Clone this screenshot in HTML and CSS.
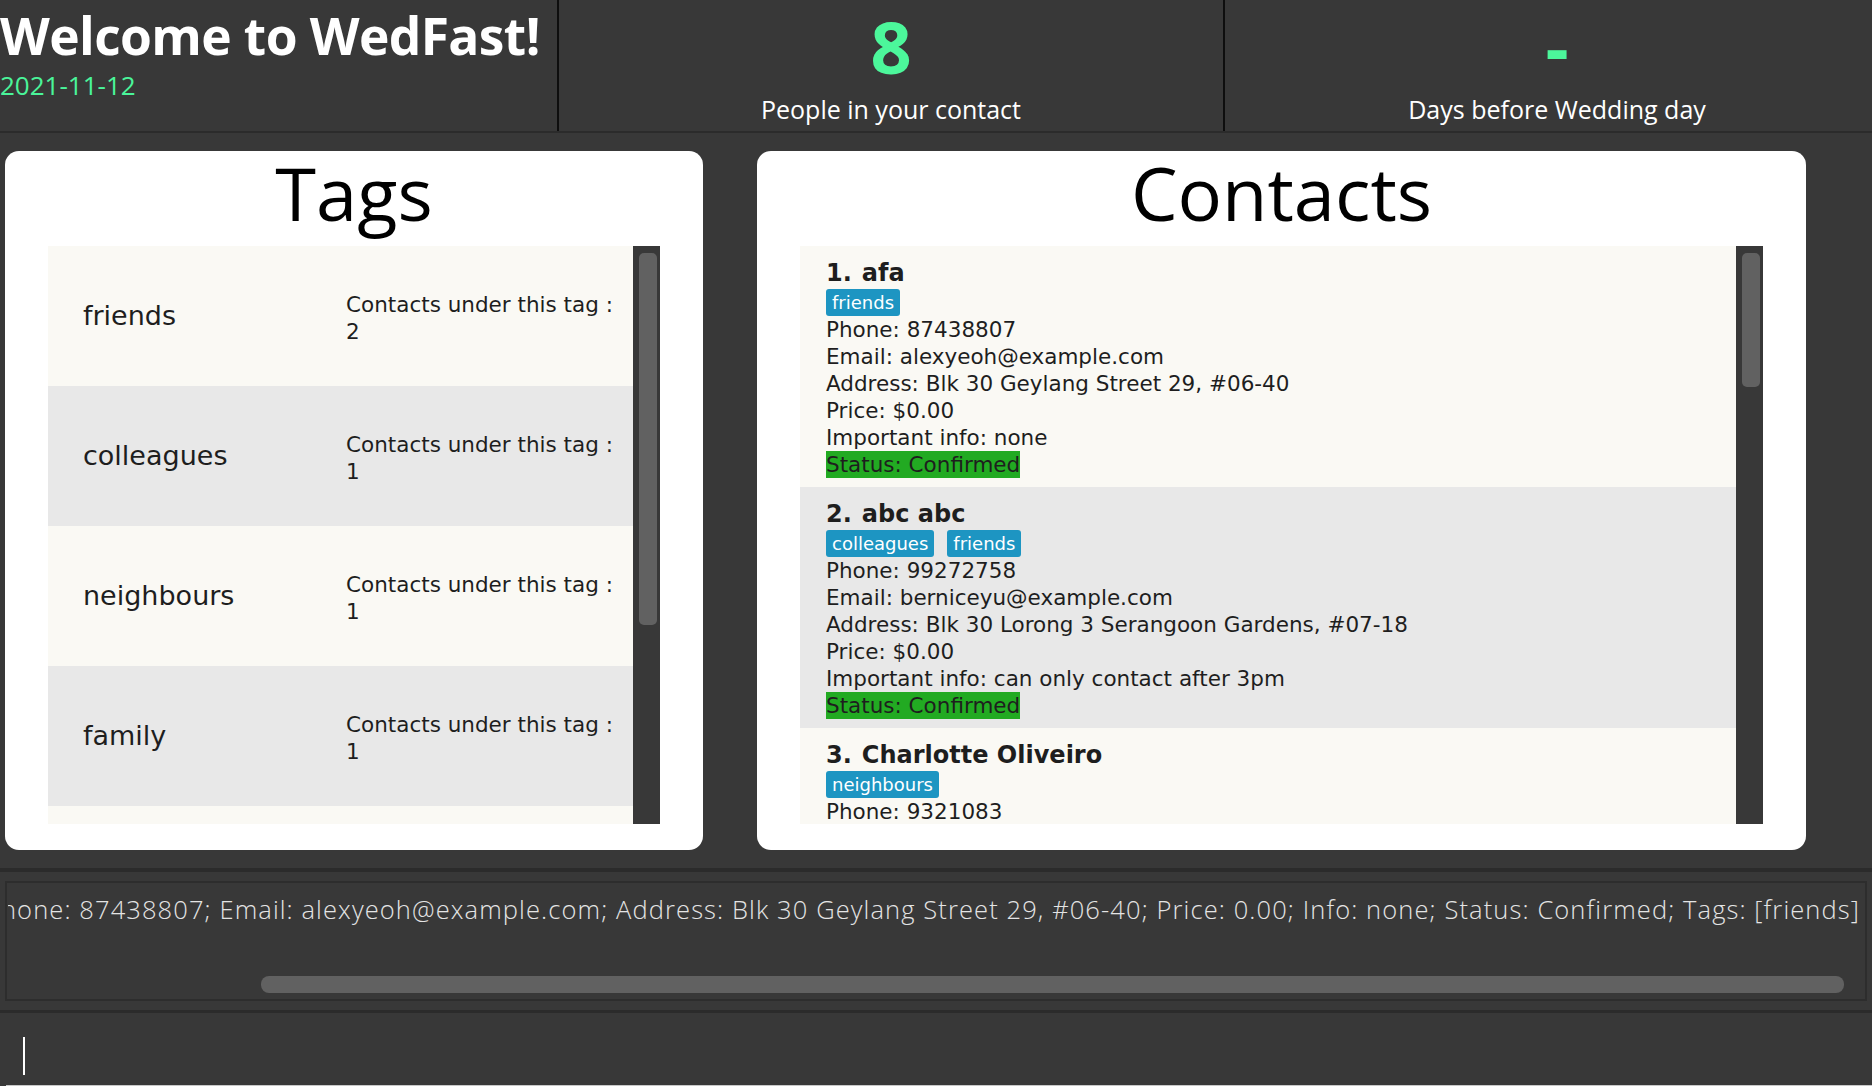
FILE: index.html
```html
<!DOCTYPE html>
<html lang="en">
<head>
<meta charset="utf-8">
<title>WedFast</title>
<link rel="stylesheet" href="styles.css">
</head>
<body>
<div class="app">
  <header class="topbar">
    <div class="welcome">
      <div class="welcome-title">Welcome to WedFast!</div>
      <div class="welcome-date">2021-11-12</div>
    </div>
    <div class="stat">
      <div class="stat-value">8</div>
      <div class="stat-label">People in your contact</div>
    </div>
    <div class="stat stat-last">
      <div class="stat-value">-</div>
      <div class="stat-label">Days before Wedding day</div>
    </div>
  </header>

  <main class="panels">
    <section class="card card-tags">
      <h2 class="card-title">Tags</h2>
      <div class="list">
        <div class="list-body">
          <div class="tag-row">
            <div class="tag-name">friends</div>
            <div class="tag-count">Contacts under this tag :<br>2</div>
          </div>
          <div class="tag-row">
            <div class="tag-name">colleagues</div>
            <div class="tag-count">Contacts under this tag :<br>1</div>
          </div>
          <div class="tag-row">
            <div class="tag-name">neighbours</div>
            <div class="tag-count">Contacts under this tag :<br>1</div>
          </div>
          <div class="tag-row">
            <div class="tag-name">family</div>
            <div class="tag-count">Contacts under this tag :<br>1</div>
          </div>
          <div class="tag-row"></div>
        </div>
        <div class="vscroll"><div class="vthumb vthumb-tags"></div></div>
      </div>
    </section>

    <section class="card card-contacts">
      <h2 class="card-title">Contacts</h2>
      <div class="list">
        <div class="list-body">
          <div class="contact-row">
            <div class="contact-name"><span>1.</span><span>afa</span></div>
            <div class="badges"><span class="badge">friends</span></div>
            <div class="field">Phone: 87438807</div>
            <div class="field">Email: alexyeoh@example.com</div>
            <div class="field">Address: Blk 30 Geylang Street 29, #06-40</div>
            <div class="field">Price: $0.00</div>
            <div class="field">Important info: none</div>
            <div class="field"><span class="status">Status: Confirmed</span></div>
          </div>
          <div class="contact-row">
            <div class="contact-name"><span>2.</span><span>abc abc</span></div>
            <div class="badges"><span class="badge">colleagues</span><span class="badge">friends</span></div>
            <div class="field">Phone: 99272758</div>
            <div class="field">Email: berniceyu@example.com</div>
            <div class="field">Address: Blk 30 Lorong 3 Serangoon Gardens, #07-18</div>
            <div class="field">Price: $0.00</div>
            <div class="field">Important info: can only contact after 3pm</div>
            <div class="field"><span class="status">Status: Confirmed</span></div>
          </div>
          <div class="contact-row">
            <div class="contact-name"><span>3.</span><span>Charlotte Oliveiro</span></div>
            <div class="badges"><span class="badge">neighbours</span></div>
            <div class="field">Phone: 9321083</div>
          </div>
        </div>
        <div class="vscroll"><div class="vthumb vthumb-contacts"></div></div>
      </div>
    </section>
  </main>

  <div class="result">
    <div class="result-box">
      <div class="result-text"><span>Edited Person: afa; Phone: 87438807; Email: alexyeoh@example.com; Address: Blk 30 Geylang Street 29, #06-40; Price: 0.00; Info: none; Status: Confirmed; Tags: [friends]</span></div>
      <div class="hthumb"></div>
    </div>
  </div>

  <div class="command">
    <div class="command-field"><div class="caret"></div></div>
  </div>
</div>
</body>
</html>
```

FILE: styles.css
```css
* { box-sizing: border-box; }

html, body {
  margin: 0;
  padding: 0;
}

body {
  background: #383838;
  width: 1872px;
  height: 1086px;
  overflow: hidden;
  font-family: "Open Sans", "Noto Sans", sans-serif;
}

.app {
  width: 1872px;
  height: 1086px;
  overflow: hidden;
}

/* ---------- top bar ---------- */
.topbar {
  display: flex;
  height: 133px;
  border-bottom: 2px solid #2b2b2b;
}

.welcome {
  flex: none;
  width: 559px;
  border-right: 2px solid #0e0e0e;
}

.welcome-title {
  font-weight: 700;
  font-size: 51.5px;
  letter-spacing: -0.6px;
  line-height: 70px;
  color: #ffffff;
  white-space: nowrap;
}

.welcome-date {
  font-size: 26px;
  line-height: 30px;
  color: #4af59a;
}

.stat {
  flex: none;
  width: 666px;
  border-right: 2px solid #0e0e0e;
  text-align: center;
}

.stat-last {
  width: 664px;
  border-right: none;
}

.stat-value {
  font-weight: 700;
  font-size: 72px;
  line-height: 92px;
  color: #4cf79b;
}

.stat-label {
  margin-top: 2px;
  font-size: 25px;
  line-height: 30px;
  color: #ffffff;
}

/* ---------- panels ---------- */
.panels {
  display: flex;
  gap: 54px;
  height: 735px;
  padding: 18px 0 0 5px;
}

.card {
  flex: none;
  background: #ffffff;
  border-radius: 14px;
  height: 699px;
  padding: 2px 43px 26px;
  display: flex;
  flex-direction: column;
}

.card-tags { width: 698px; }
.card-contacts { width: 1049px; }

.card-title {
  margin: 0;
  font-weight: 400;
  font-size: 74px;
  line-height: 80px;
  text-align: center;
  color: #000000;
}

.list {
  margin-top: 13px;
  height: 578px;
  display: flex;
}

.list-body {
  flex: 1;
  overflow: hidden;
}

.vscroll {
  flex: none;
  width: 27px;
  background: #383838;
  padding: 7px 3px 0 6px;
}

.vthumb {
  background: #616161;
  border-radius: 5px;
}

.vthumb-tags { height: 372px; }
.vthumb-contacts { height: 134px; }

/* ---------- tag rows ---------- */
.tag-row {
  height: 140px;
  display: grid;
  grid-template-columns: 263px 1fr;
  align-items: center;
  padding-left: 35px;
  font-family: "DejaVu Sans", sans-serif;
  color: #1e1e1e;
  background: #faf9f4;
}

.tag-row:nth-child(even) { background: #e8e8e8; }

.tag-name {
  font-size: 27px;
  line-height: 32px;
}

.tag-count {
  font-size: 21.5px;
  line-height: 27px;
  padding-top: 3px;
}

/* ---------- contact rows ---------- */
.contact-row {
  padding: 12px 26px 9px;
  font-family: "DejaVu Sans", sans-serif;
  color: #1e1e1e;
  background: #faf9f4;
}

.contact-row:nth-child(even) { background: #e8e8e8; }

.contact-name {
  display: flex;
  gap: 10px;
  font-weight: 700;
  font-size: 24px;
  line-height: 30px;
  white-space: nowrap;
}

.badges {
  display: flex;
  gap: 13px;
  margin-top: 1px;
}

.badge {
  height: 27px;
  line-height: 27px;
  padding: 0 6px;
  border-radius: 3px;
  background: #1d95c2;
  color: #ffffff;
  font-size: 18px;
}

.field {
  font-size: 21.5px;
  line-height: 27px;
  white-space: nowrap;
}

.status {
  display: inline-block;
  background: #22aa22;
}

/* ---------- result display ---------- */
.result {
  height: 142px;
  border-top: 4px solid #2b2b2b;
  padding: 9px 5px;
}

.result-box {
  height: 120px;
  border: 2px solid #2d2d2d;
  padding: 9px 5px 0 1px;
}

.result-text {
  display: flex;
  justify-content: flex-end;
  overflow: hidden;
  white-space: nowrap;
  font-family: "Open Sans", sans-serif;
  font-weight: 300;
  font-size: 25.5px;
  letter-spacing: 1.1px;
  line-height: 34px;
  color: #e4e4e4;
}

.result-text span { flex: none; }

.hthumb {
  margin-top: 50px;
  margin-left: 253px;
  width: 1583px;
  height: 17px;
  background: #616161;
  border-radius: 8px;
}

/* ---------- command box ---------- */
.command {
  height: 76px;
  border-top: 3px solid #2b2b2b;
  padding-left: 6px;
}

.command-field {
  height: 73px;
  border-bottom: 1px solid #c8c8c8;
  padding: 24px 0 0 17px;
}

.caret {
  width: 2px;
  height: 38px;
  background: #ffffff;
}
```
